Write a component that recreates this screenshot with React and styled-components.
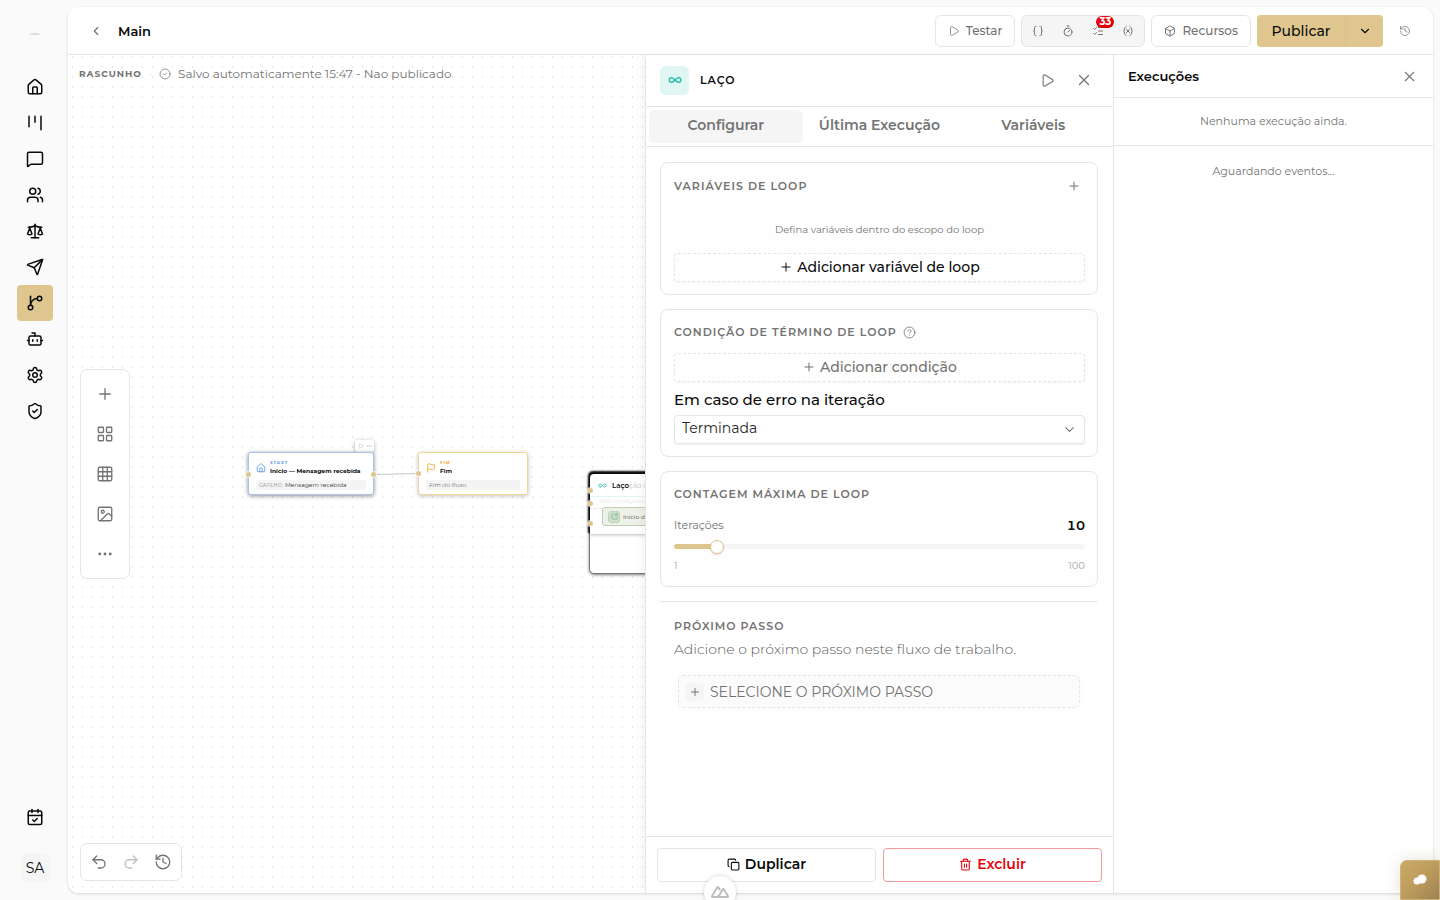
import React, { useState } from "react";
import styled, { createGlobalStyle, css } from "styled-components";
import {
  House, MessageSquare, Users, Scale, Send, Bot, Settings, ShieldCheck, CalendarCheck,
  ChevronLeft, ChevronDown, Play, Braces, Timer, ListChecks, Variable, Box, History, X, Plus,
  LayoutGrid, Grid3x3, Image, Ellipsis, Undo2, Redo2, CircleCheck, CircleQuestionMark, Copy,
  Trash2, Infinity as InfinityIcon, Flag, SquareArrowOutUpRight,
} from "lucide-react";

const ink = "#0a0a0a";
const muted = "#737373";
const line = "#e5e5e5";
const gold = "#dec68e";

const Global = createGlobalStyle`
  * { box-sizing: border-box; }
  body { margin: 0; background: #fafafa; color: ${ink}; font-family: Montserrat, Inter, "Liberation Sans", sans-serif; font-size: 14px; overflow: hidden; }
  button, select, input { font-family: inherit; }
  button { cursor: pointer; margin: 0; padding: 0; border: 0; background: none; color: inherit; }
  h1, h2, h3, p { margin: 0; }
  svg { flex: none; }
`;

const Shell = styled.div`
  display: flex;
  height: 100vh;
  padding: 7px 7px 7px 0;
`;

const Sidebar = styled.nav`
  width: 68px;
  flex: none;
  display: flex;
  flex-direction: column;
  align-items: center;
  padding: 62px 1px 11px 0;
  position: relative;
`;

const Brand = styled.span`
  position: absolute;
  top: 26px;
  left: 29px;
  width: 11px;
  height: 2px;
  border-radius: 1px;
  background: linear-gradient(90deg, #eee, #dcdcdc 50%, #f6e3cf);
`;

const NavLink = styled.a`
  width: 36px;
  height: 36px;
  flex: none;
  display: grid;
  place-items: center;
  border-radius: 4px;
  color: ${ink};
  margin-left: 3px;
  background: ${(p) => (p.$active ? gold : "transparent")};
`;

const Spacer = styled.div`
  flex: 1;
`;

const Avatar = styled.button`
  width: 29px;
  height: 29px;
  margin: 18px 0 0 3px;
  border-radius: 7px;
  background: #f5f5f5;
  font-size: 14px;
`;

const Main = styled.main`
  flex: 1;
  min-width: 0;
  display: flex;
  flex-direction: column;
  background: #fff;
  border-radius: 11px;
  overflow: hidden;
  box-shadow: 0 1px 3px rgba(0, 0, 0, 0.15);
`;

const Header = styled.header`
  flex: none;
  height: 48px;
  display: flex;
  align-items: center;
  gap: 6px;
  padding: 0 12px;
  border-bottom: 1px solid ${line};
`;

const IconButton = styled.button`
  width: 32px;
  height: 32px;
  display: grid;
  place-items: center;
  color: ${muted};
`;

const Title = styled.h1`
  font-size: 13px;
  line-height: 20px;
  font-weight: 600;
`;

const OutlineButton = styled.button`
  height: 32px;
  display: flex;
  align-items: center;
  justify-content: center;
  gap: 6px;
  padding: 0 12px;
  border: 1px solid ${line};
  border-radius: 6px;
  background: #fff;
  color: ${muted};
  font-size: 12px;
  font-weight: 500;
`;

const ToolGroup = styled.div`
  height: 32px;
  display: flex;
  align-items: center;
  padding: 0 1px;
  border: 1px solid ${line};
  border-radius: 6px;
  background: #f5f5f5;
`;

const ToolButton = styled.button`
  position: relative;
  width: ${(p) => (p.$compact ? 22 : 30)}px;
  height: 28px;
  display: grid;
  place-items: center;
  color: ${muted};
`;

const Badge = styled.span`
  position: absolute;
  top: -1px;
  left: 13px;
  width: 18px;
  height: 12px;
  border-radius: 6px;
  background: #e7000b;
  color: #fff;
  font-size: 10px;
  line-height: 12px;
  font-weight: 700;
  text-align: center;
`;

const Publish = styled.div`
  display: flex;
  height: 32px;
  border-radius: 4px;
  overflow: hidden;
  background: ${gold};
`;

const PublishButton = styled.button`
  width: 89px;
  border-right: 1px solid #d8c08a;
  font-size: 14px;
  font-weight: 500;
`;

const PublishMenu = styled.button`
  width: 37px;
  display: grid;
  place-items: center;
`;

const Workspace = styled.div`
  flex: 1;
  min-height: 0;
  display: flex;
`;

const Canvas = styled.section`
  flex: 1;
  min-width: 0;
  position: relative;
  overflow: hidden;
  background-image:
    linear-gradient(90deg, #fff 4px, transparent 4px, transparent 5px, #fff 5px),
    linear-gradient(#fff 1px, #e5e5e5 1px, #e5e5e5 3px, #fff 3px);
  background-size: 10px 10px;
`;

const Status = styled.div`
  display: flex;
  align-items: center;
  gap: 7px;
  padding: 9px 11px;
  color: ${muted};
  font-size: 12px;
  line-height: 20px;
  strong { font-size: 9px; font-weight: 700; letter-spacing: 1px; }
  i { color: #d4d4d4; font-style: normal; }
`;

const FloatingBar = styled.div`
  position: absolute;
  left: 12px;
  display: flex;
  background: #fff;
  border: 1px solid ${line};
  border-radius: 7px;
  color: ${muted};
  ${(p) =>
    p.$vertical
      ? css`top: 50%; transform: translateY(-50%); flex-direction: column; padding: 4px;`
      : css`bottom: 12px; padding: 2px;`}
`;

const BarButton = styled.button`
  width: ${(p) => (p.$small ? 32 : 40)}px;
  height: ${(p) => (p.$small ? 32 : 40)}px;
  display: grid;
  place-items: center;
  opacity: ${(p) => (p.disabled ? 0.45 : 1)};
`;

const Node = styled.article`
  position: absolute;
  left: ${(p) => p.$x}px;
  top: ${(p) => p.$y}px;
  width: ${(p) => p.$w}px;
  height: 43px;
  padding: 6px 7px 4px;
  border-radius: 3px;
  background: #fff;
  border: 1px solid ${(p) => p.$tone};
  box-shadow: 0 1px 4px rgba(0, 0, 0, ${(p) => (p.$strong ? 0.45 : 0.25)});
`;

const NodeHead = styled.div`
  display: flex;
  align-items: center;
  gap: 4px;
  height: 18px;
  color: ${(p) => p.$tone};
  small { display: block; font-size: 4px; line-height: 6px; font-weight: 700; letter-spacing: 1px; }
  b { display: block; font-size: 6px; line-height: 11px; font-weight: 700; color: ${ink}; white-space: nowrap; }
`;

const NodeBody = styled.div`
  margin-top: 3px;
  height: 10px;
  padding: 0 3px;
  border-radius: 2px;
  background: #f4f4f4;
  font-size: 6px;
  line-height: 10px;
  white-space: nowrap;
  color: #333;
  span { color: #8a8a8a; font-size: 5px; margin-right: 3px; }
  em { color: ${muted}; }
`;

const Port = styled.span`
  position: absolute;
  left: ${(p) => p.$x}px;
  top: ${(p) => p.$y}px;
  width: 5px;
  height: 5px;
  border-radius: 50%;
  background: ${gold};
  box-shadow: 0 0 0 1px rgba(255, 255, 255, 0.7);
`;

const NodeTools = styled.div`
  position: absolute;
  left: 287px;
  top: 385px;
  width: 19px;
  height: 12px;
  display: flex;
  align-items: center;
  justify-content: center;
  gap: 2px;
  border-radius: 3px;
  background: #fff;
  color: #b5b5b5;
  box-shadow: 0 1px 4px rgba(0, 0, 0, 0.35);
`;

const Edge = styled.svg`
  position: absolute;
  left: 305px;
  top: 414px;
`;

const LoopFrame = styled.article`
  position: absolute;
  left: 521px;
  top: 418px;
  width: 180px;
  height: 101px;
  border-radius: 5px;
  background: #fff;
  border: 1px solid #777;
  box-shadow: 0 1px 3px rgba(0, 0, 0, 0.5);
`;

const LoopCard = styled.div`
  height: 60px;
  border-radius: 4px 4px 0 0;
  background: #fff;
  box-shadow: -1px -2px 2px 1px #0a0a0a, 0 2px 3px rgba(0, 0, 0, 0.15);
`;

const LoopHead = styled.div`
  display: flex;
  align-items: center;
  gap: 5px;
  height: 23px;
  padding: 0 8px;
  border-bottom: 1px solid #e1f5f2;
  color: #14b8a6;
  font-size: 7px;
  white-space: nowrap;
  b { color: ${ink}; font-weight: 600; }
  span { color: #c8c8c8; }
`;

const LoopHint = styled.div`
  height: 12px;
  padding-left: 10px;
  color: #e4e4e4;
  font-size: 6px;
  line-height: 9px;
  font-style: italic;
  border-bottom: 1px solid #eee;
`;

const LoopStart = styled.div`
  display: flex;
  align-items: center;
  gap: 3px;
  height: 19px;
  margin: -2px 0 0 12px;
  padding: 0 5px;
  border: 1px solid #bdd0ae;
  border-radius: 3px;
  background: #edf2e8;
  font-size: 6px;
  color: #444;
  white-space: nowrap;
`;

const LoopGlyph = styled.span`
  width: 12px;
  height: 12px;
  display: grid;
  place-items: center;
  border: 1px solid #bfd2b5;
  border-radius: 3px;
  background: #d2dfc9;
  color: #4fb08b;
`;

const Panel = styled.aside`
  width: 468px;
  flex: none;
  display: flex;
  flex-direction: column;
  border-left: 1px solid ${line};
  background: #fff;
  box-shadow: -4px 0 8px rgba(0, 0, 0, 0.04);
  position: relative;
`;

const PanelHead = styled.div`
  flex: none;
  height: 52px;
  display: flex;
  align-items: center;
  gap: 5px;
  padding: 0 13px 1px 14px;
  border-bottom: 1px solid ${line};
  h2 { margin-left: 6px; font-size: 11px; font-weight: 600; letter-spacing: 1px; flex: 1; }
`;

const KindTile = styled.span`
  width: 29px;
  height: 29px;
  display: grid;
  place-items: center;
  border-radius: 6px;
  background: #e0f6f3;
  color: #14b8a6;
`;

const Tabs = styled.div`
  flex: none;
  height: 40px;
  display: flex;
  padding: 3px;
  border-bottom: 1px solid ${line};
`;

const Tab = styled.button`
  flex: 1;
  height: 33px;
  padding-bottom: 3px;
  border-radius: 5px;
  color: ${muted};
  font-size: 14px;
  font-weight: 600;
  background: ${(p) => (p.$active ? "#f5f5f5" : "transparent")};
`;

const PanelBody = styled.div`
  flex: 1;
  min-height: 0;
  display: flex;
  flex-direction: column;
  gap: 14px;
  padding: 15px 15px 15px 14px;
`;

const Card = styled.section`
  padding: 10px 12px 12px 13px;
  border: 1px solid ${line};
  border-radius: 8px;
  background: #fefefe;
`;

const CardHead = styled.div`
  height: ${(p) => (p.$plain ? 24 : 26)}px;
  margin-bottom: ${(p) => (p.$plain ? 9 : 0)}px;
  display: flex;
  align-items: center;
  justify-content: space-between;
`;

const Label = styled.h3`
  display: flex;
  align-items: center;
  gap: 6px;
  color: ${muted};
  font-size: 11px;
  line-height: 16px;
  font-weight: 600;
  letter-spacing: 1px;
`;

const Hint = styled.p`
  padding: 23px 0 15px;
  color: ${muted};
  font-size: 10px;
  line-height: 16px;
  text-align: center;
`;

const DashedButton = styled.button`
  width: 100%;
  height: 29px;
  display: flex;
  align-items: center;
  justify-content: center;
  gap: 4px;
  padding-bottom: 1px;
  border: 1px dashed ${line};
  border-radius: 4px;
  color: ${(p) => (p.$quiet ? muted : ink)};
  font-size: 14px;
  font-weight: 500;
  box-shadow: 0 1px 2px rgba(0, 0, 0, 0.04);
`;

const FieldLabel = styled.label`
  display: block;
  padding: 7px 0 4px;
  font-size: 15px;
  line-height: 22px;
  font-weight: 500;
`;

const SelectWrap = styled.div`
  position: relative;
  svg { position: absolute; right: 8px; top: 7px; color: ${muted}; pointer-events: none; }
`;

const Select = styled.select`
  appearance: none;
  width: 100%;
  height: 29px;
  display: block;
  padding: 0 7px 3px;
  border: 1px solid ${line};
  border-radius: 4px;
  background: #fff;
  color: #262626;
  font-size: 14px;
  box-shadow: 0 1px 2px rgba(0, 0, 0, 0.06);
`;

const Row = styled.div`
  display: flex;
  align-items: center;
  justify-content: space-between;
  font-size: ${(p) => (p.$small ? 10 : 11)}px;
  line-height: ${(p) => (p.$small ? 16 : 20)}px;
  color: ${(p) => (p.$small ? "#a6a6a6" : muted)};
  output { color: ${ink}; font-size: 13px; font-weight: 600; font-variant-numeric: tabular-nums; }
`;

const Range = styled.input`
  appearance: none;
  display: block;
  width: 100%;
  height: 5px;
  margin: 9px 0;
  border-radius: 3px;
  background: linear-gradient(90deg, ${gold} ${(p) => p.$fill}%, #f5f5f5 ${(p) => p.$fill}%);
  &::-webkit-slider-thumb {
    appearance: none;
    width: 14px;
    height: 14px;
    border-radius: 50%;
    background: #fff;
    border: 1px solid ${gold};
    box-shadow: 0 1px 2px rgba(0, 0, 0, 0.12);
  }
`;

const NextStep = styled.section`
  padding: 16px 15px 0 14px;
  border-top: 1px solid ${line};
  p { padding: 5px 0 16px; color: #5c5c5c; font-size: 14px; font-weight: 300; line-height: 20px; }
`;

const StepButton = styled.button`
  width: calc(100% - 7px);
  height: 33px;
  margin-left: 4px;
  display: flex;
  align-items: center;
  gap: 6px;
  padding: 0 7px;
  border: 1px dashed ${line};
  border-radius: 5px;
  background: #fbfbfb;
  color: ${muted};
  font-size: 14px;
  outline: 3px solid #fdfdfd;
  span { width: 18px; height: 18px; display: grid; place-items: center; border-radius: 4px; background: #f5f5f5; }
`;

const PanelFoot = styled.footer`
  flex: none;
  display: flex;
  gap: 7px;
  padding: 11px;
  border-top: 1px solid ${line};
`;

const FootButton = styled.button`
  flex: 1;
  height: 34px;
  display: flex;
  align-items: center;
  justify-content: center;
  gap: 5px;
  padding-bottom: 2px;
  border: 1px solid ${(p) => (p.$danger ? "#f5989c" : line)};
  border-radius: 4px;
  color: ${(p) => (p.$danger ? "#e7000b" : ink)};
  font-size: 14px;
  font-weight: 600;
`;

const Runs = styled.aside`
  width: 320px;
  flex: none;
  border-left: 1px solid ${line};
  p { color: ${muted}; font-size: 11px; line-height: 16px; text-align: center; }
`;

const RunsHead = styled.div`
  height: 43px;
  display: flex;
  align-items: center;
  justify-content: space-between;
  padding: 0 8px 0 14px;
  border-bottom: 1px solid ${line};
  h2 { font-size: 13px; font-weight: 600; }
`;

const RunsEmpty = styled.div`
  padding: 15px 0 16px;
  border-bottom: 1px solid ${line};
`;

const RunsLog = styled.div`
  padding: 17px 0;
`;

const DevTools = styled.button`
  position: fixed;
  left: 50%;
  bottom: -8px;
  width: 32px;
  height: 32px;
  margin-left: -16px;
  display: grid;
  place-items: center;
  border-radius: 50%;
  background: #fff;
  color: #bdbdbd;
  box-shadow: 0 0 4px rgba(0, 0, 0, 0.18);
`;

const Chat = styled.button`
  position: fixed;
  right: 0;
  bottom: 0;
  width: 40px;
  height: 40px;
  display: grid;
  place-items: center;
  border-radius: 7px 0 0 0;
  border: 1px solid #cdb27b;
  background: linear-gradient(135deg, #cbaa66, #bd9c5c 50%, #9c8353);
  box-shadow: 0 0 16px rgba(120, 90, 30, 0.18);
`;

function KanbanIcon() {
  return (
    <svg width="18" height="18" viewBox="0 0 24 24" fill="none" stroke="currentColor" strokeWidth="2" strokeLinecap="round">
      <path d="M4 3v14M12 3v8M20 3v18" />
    </svg>
  );
}

function BranchIcon() {
  return (
    <svg width="18" height="18" viewBox="0 0 24 24" fill="none" stroke="currentColor" strokeWidth="2" strokeLinecap="round">
      <path d="M6 3v12" />
      <circle cx="18" cy="6" r="3" />
      <circle cx="6" cy="18" r="3" />
      <path d="M15 6a9 9 0 0 0-9 9" />
    </svg>
  );
}

const navItems = [
  ["Início", House], ["Quadro", KanbanIcon], ["Conversas", MessageSquare], ["Contatos", Users],
  ["Jurídico", Scale], ["Campanhas", Send], ["Fluxos", BranchIcon], ["Agentes", Bot],
  ["Configurações", Settings], ["Segurança", ShieldCheck],
];
const canvasTools = [["Adicionar", Plus], ["Blocos", LayoutGrid], ["Grade", Grid3x3], ["Imagem", Image], ["Mais", Ellipsis]];
const tabs = ["Configurar", "Última Execução", "Variáveis"];

export default function App() {
  const [tab, setTab] = useState(tabs[0]);
  const [max, setMax] = useState(10);
  const fill = Math.round(((max - 1) / 99) * 97 + 1);

  return (
    <>
      <Global />
      <Shell>
        <Sidebar>
          <Brand />
          {navItems.map(([name, Icon]) => (
            <NavLink key={name} href="#" aria-label={name} $active={name === "Fluxos"}>
              <Icon size={18} />
            </NavLink>
          ))}
          <Spacer />
          <NavLink href="#" aria-label="Agenda"><CalendarCheck size={18} /></NavLink>
          <Avatar>SA</Avatar>
        </Sidebar>
        <Main>
          <Header>
            <IconButton aria-label="Voltar"><ChevronLeft size={14} /></IconButton>
            <Title>Main</Title>
            <Spacer />
            <OutlineButton><Play size={12} strokeWidth={1.5} />Testar</OutlineButton>
            <ToolGroup>
              <ToolButton aria-label="Variáveis de ambiente"><Braces size={12} /></ToolButton>
              <ToolButton aria-label="Temporizador"><Timer size={12} /></ToolButton>
              <ToolButton aria-label="Pendências"><ListChecks size={12} /><Badge>33</Badge></ToolButton>
              <ToolButton aria-label="Variáveis"><Variable size={12} /></ToolButton>
            </ToolGroup>
            <OutlineButton><Box size={12} />Recursos</OutlineButton>
            <Publish>
              <PublishButton>Publicar</PublishButton>
              <PublishMenu aria-label="Opções de publicação"><ChevronDown size={14} /></PublishMenu>
            </Publish>
            <IconButton aria-label="Histórico"><History size={12} strokeWidth={1.5} /></IconButton>
          </Header>
          <Workspace>
            <Canvas>
              <Status>
                <strong>RASCUNHO</strong><i>·</i><CircleCheck size={12} strokeWidth={1.5} />
                <span>Salvo automaticamente 15:47 - Nao publicado</span>
              </Status>
              <FloatingBar $vertical>
                {canvasTools.map(([name, Icon]) => (
                  <BarButton key={name} aria-label={name}><Icon size={18} strokeWidth={1.75} /></BarButton>
                ))}
              </FloatingBar>
              <Edge width="46" height="10" fill="none" stroke="#c4c4c4"><path d="M1 5.500L46 4.500" /></Edge>
              <NodeTools><Play size={6} /><Ellipsis size={6} /></NodeTools>
              <Node $x={180} $y={397} $w={126} $tone="#a9c2ee" $strong>
                <NodeHead $tone="#5b93ee">
                  <House size={10} />
                  <div><small>START</small><b>Início — Mensagem recebida</b></div>
                </NodeHead>
                <NodeBody><span>GATILHO</span>Mensagem recebida</NodeBody>
                <Port $x={-3} $y={19} /><Port $x={122} $y={19} />
              </Node>
              <Node $x={350} $y={397} $w={110} $tone="#f3d596">
                <NodeHead $tone="#f5a623">
                  <Flag size={10} />
                  <div><small>FIM</small><b>Fim</b></div>
                </NodeHead>
                <NodeBody><em>Fim do fluxo</em></NodeBody>
                <Port $x={-3} $y={18} />
              </Node>
              <LoopFrame>
                <LoopCard>
                  <LoopHead><InfinityIcon size={9} /><div><b>Laço</b><span>ção de l</span></div></LoopHead>
                  <LoopHint>Não configurado</LoopHint>
                  <LoopStart>
                    <LoopGlyph><SquareArrowOutUpRight size={7} /></LoopGlyph>Início do laço
                  </LoopStart>
                </LoopCard>
                <Port $x={-2} $y={14} /><Port $x={-2} $y={27} /><Port $x={-2} $y={47} />
              </LoopFrame>
              <FloatingBar>
                <BarButton $small aria-label="Desfazer"><Undo2 size={18} strokeWidth={1.75} /></BarButton>
                <BarButton $small aria-label="Refazer" disabled><Redo2 size={18} strokeWidth={1.75} /></BarButton>
                <BarButton $small aria-label="Histórico"><History size={18} strokeWidth={1.75} /></BarButton>
              </FloatingBar>
            </Canvas>
            <Panel>
              <PanelHead>
                <KindTile><InfinityIcon size={14} /></KindTile>
                <h2>LAÇO</h2>
                <IconButton aria-label="Executar"><Play size={15} strokeWidth={1.75} /></IconButton>
                <IconButton aria-label="Fechar"><X size={18} strokeWidth={1.75} /></IconButton>
              </PanelHead>
              <Tabs role="tablist">
                {tabs.map((t) => (
                  <Tab key={t} role="tab" aria-selected={t === tab} $active={t === tab} onClick={() => setTab(t)}>{t}</Tab>
                ))}
              </Tabs>
              <PanelBody>
                <Card>
                  <CardHead>
                    <Label>VARIÁVEIS DE LOOP</Label>
                    <ToolButton $compact aria-label="Adicionar variável"><Plus size={14} strokeWidth={1.75} /></ToolButton>
                  </CardHead>
                  <Hint>Defina variáveis dentro do escopo do loop</Hint>
                  <DashedButton><Plus size={14} strokeWidth={1.75} />Adicionar variável de loop</DashedButton>
                </Card>
                <Card>
                  <CardHead $plain><Label>CONDIÇÃO DE TÉRMINO DE LOOP <CircleQuestionMark size={13} strokeWidth={1.5} /></Label></CardHead>
                  <DashedButton $quiet><Plus size={14} strokeWidth={1.75} />Adicionar condição</DashedButton>
                  <FieldLabel htmlFor="on-error">Em caso de erro na iteração</FieldLabel>
                  <SelectWrap>
                    <Select id="on-error" defaultValue="Terminada">
                      <option>Terminada</option>
                      <option>Continuar</option>
                    </Select>
                    <ChevronDown size={15} strokeWidth={1.75} />
                  </SelectWrap>
                </Card>
                <Card>
                  <CardHead $plain><Label>CONTAGEM MÁXIMA DE LOOP</Label></CardHead>
                  <Row><label htmlFor="max-loops">Iterações</label><output>{max}</output></Row>
                  <Range id="max-loops" type="range" min="1" max="100" value={max} $fill={fill} onChange={(e) => setMax(Number(e.target.value))} />
                  <Row $small><span>1</span><span>100</span></Row>
                </Card>
                <NextStep>
                  <Label>PRÓXIMO PASSO</Label>
                  <p>Adicione o próximo passo neste fluxo de trabalho.</p>
                  <StepButton><span><Plus size={12} /></span>SELECIONE O PRÓXIMO PASSO</StepButton>
                </NextStep>
              </PanelBody>
              <PanelFoot>
                <FootButton><Copy size={13} />Duplicar</FootButton>
                <FootButton $danger><Trash2 size={13} />Excluir</FootButton>
              </PanelFoot>
            </Panel>
            <Runs>
              <RunsHead>
                <h2>Execuções</h2>
                <IconButton aria-label="Fechar execuções"><X size={17} strokeWidth={1.5} /></IconButton>
              </RunsHead>
              <RunsEmpty><p>Nenhuma execução ainda.</p></RunsEmpty>
              <RunsLog><p>Aguardando eventos...</p></RunsLog>
            </Runs>
          </Workspace>
        </Main>
      </Shell>
      <DevTools aria-label="Ferramentas">
        <svg width="18" height="12" viewBox="0 0 18 12" fill="none" stroke="currentColor" strokeWidth="2" strokeLinejoin="round">
          <path d="M10 11H2q-1.500 0-.8-1.300L6 1.700q.8-1.200 1.600 0L9 4.200M9.500 11H16q1.500 0 .8-1.300L13 3.700q-.8-1.200-1.600 0L8.500 9q-1.200 2-3.500 2" />
        </svg>
      </DevTools>
      <Chat aria-label="Chat">
        <svg width="14" height="12" viewBox="0 0 14 12" fill="#fff"><circle cx="4" cy="7" r="3.500" /><circle cx="9" cy="5" r="4.500" /></svg>
      </Chat>
    </>
  );
}
